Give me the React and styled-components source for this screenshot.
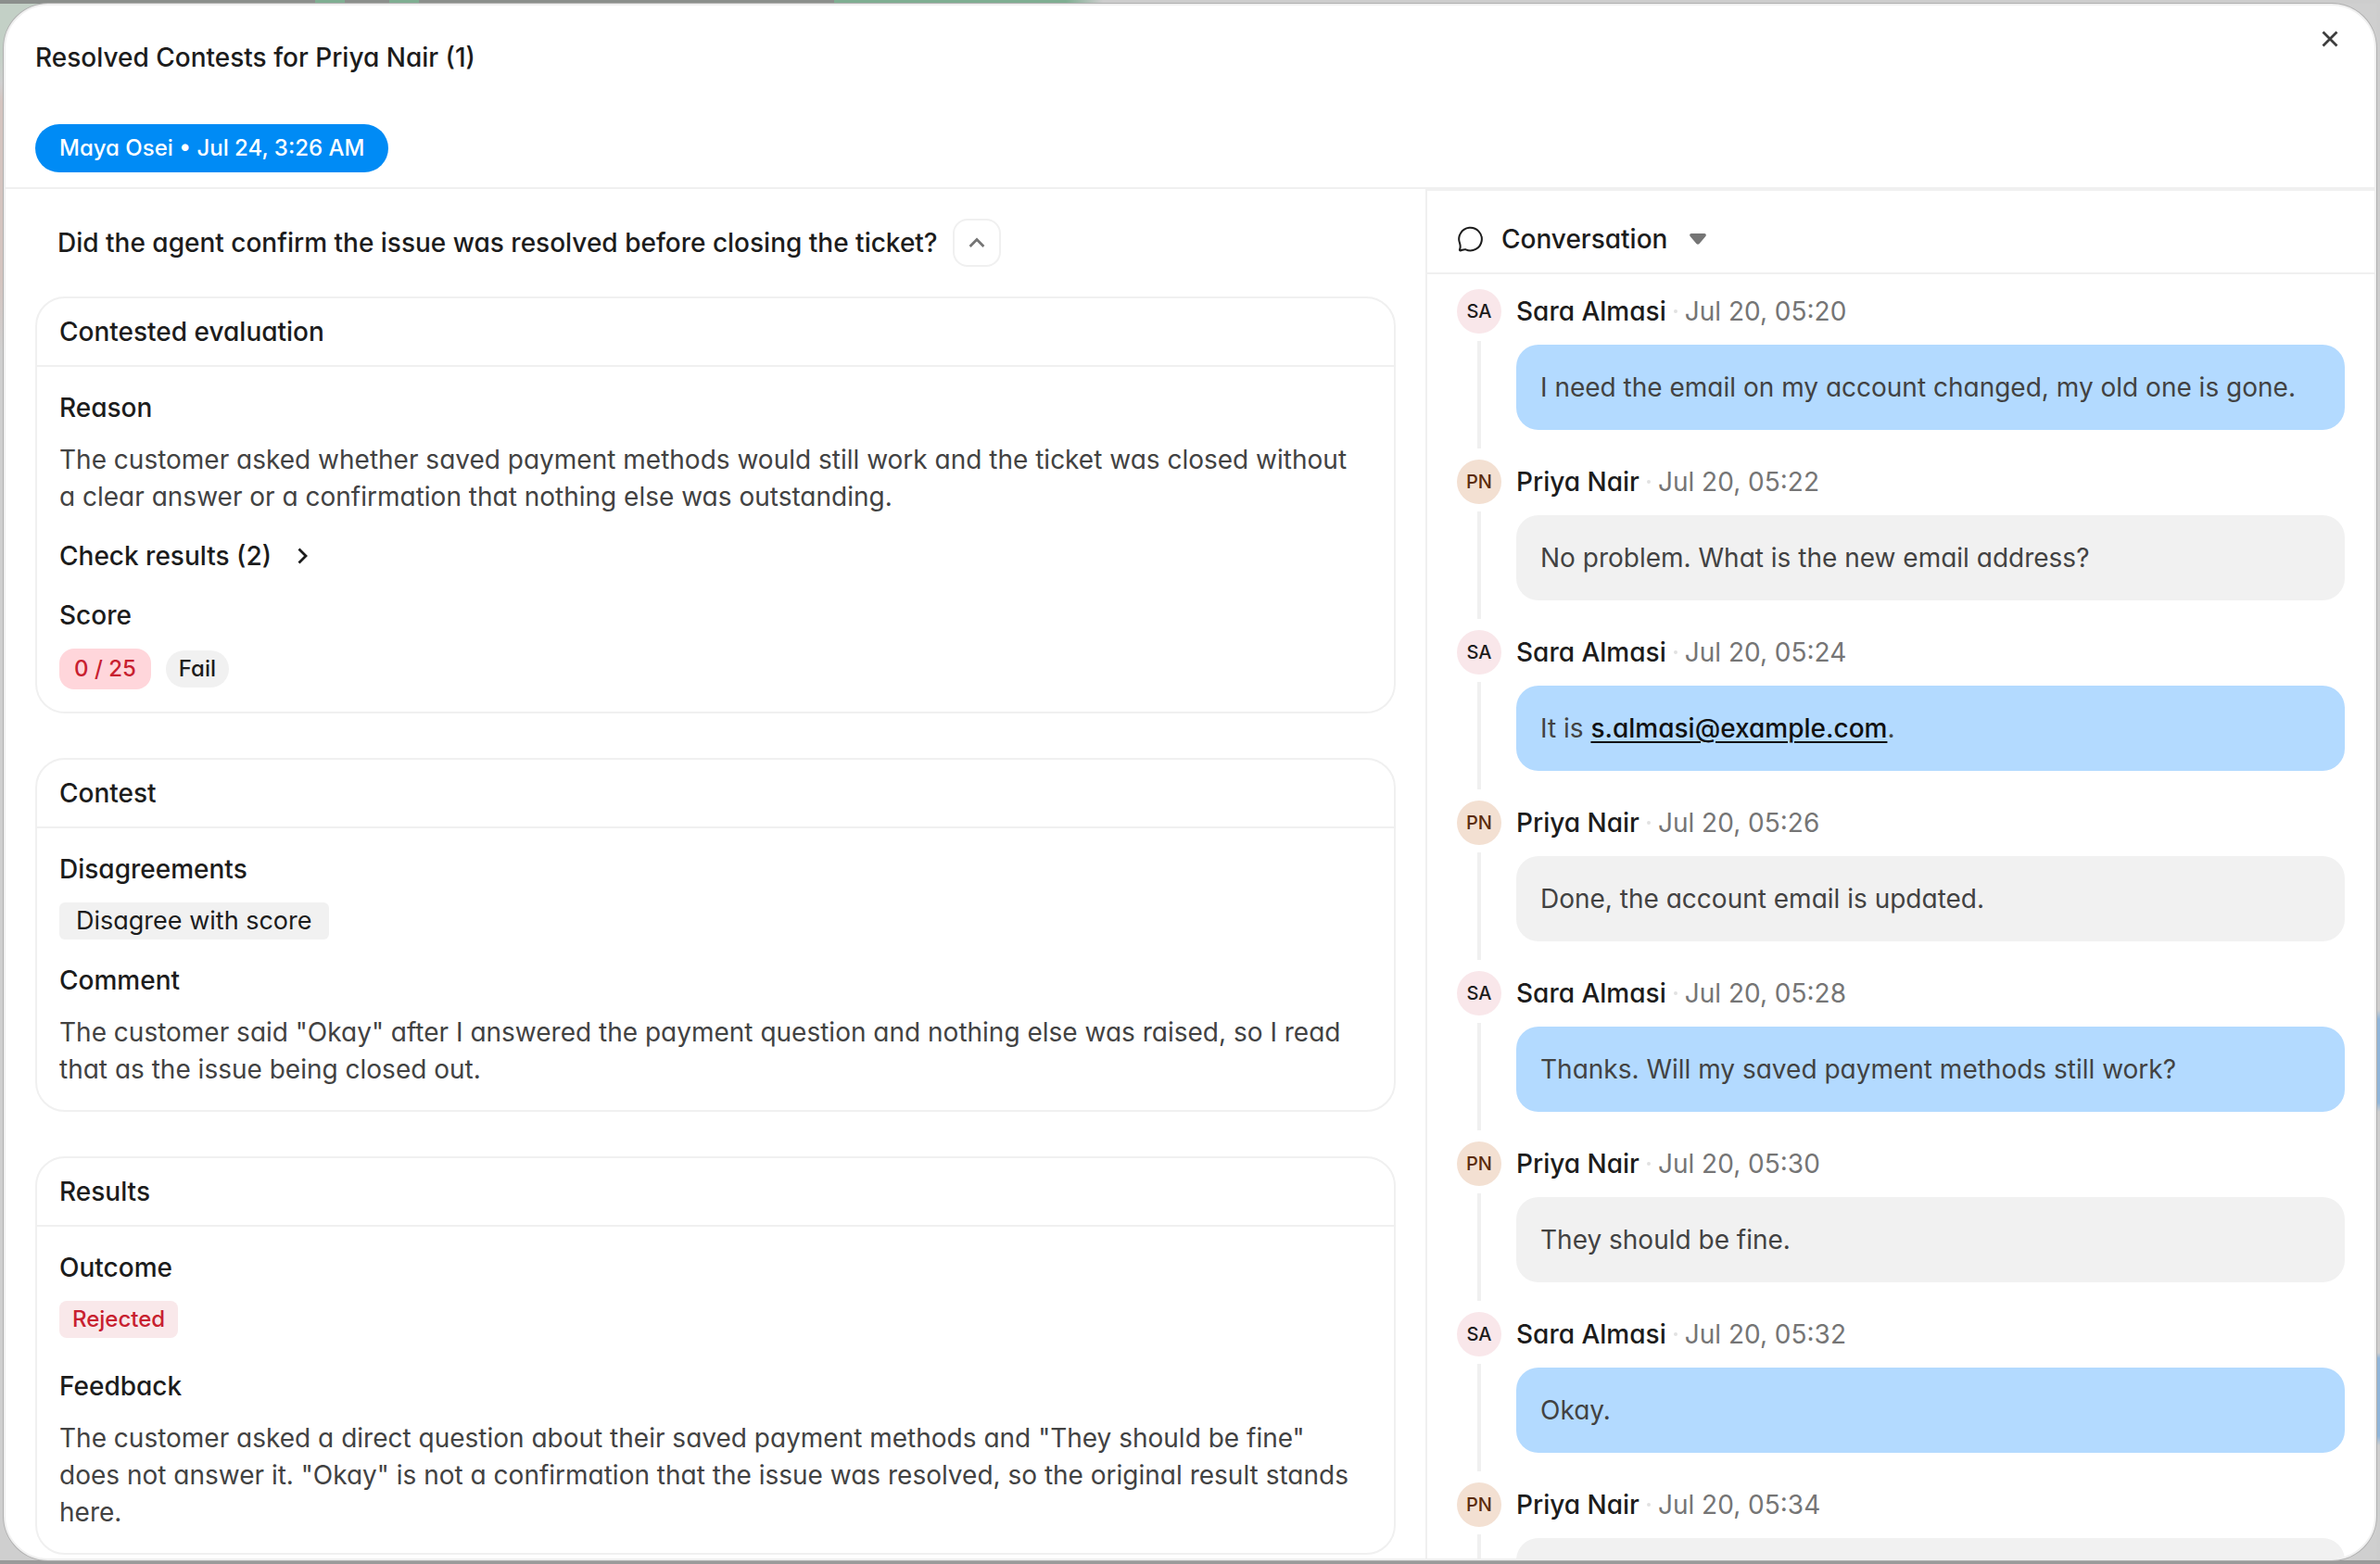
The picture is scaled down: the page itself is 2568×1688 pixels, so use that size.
import styled, { createGlobalStyle } from "styled-components";

const line = "#f0f0f0";

const GlobalStyle = createGlobalStyle`
  * {
    box-sizing: border-box;
  }
  html,
  body,
  #root {
    height: 100%;
  }
  body {
    margin: 0;
    overflow: hidden;
    font-family: Inter, "Liberation Sans", sans-serif;
    font-feature-settings: "cv11";
    font-size: 28px;
    line-height: 40px;
    color: #1c1c1c;
    -webkit-font-smoothing: antialiased;
  }
  button {
    font: inherit;
    font-feature-settings: inherit;
    color: inherit;
    padding: 0;
    border: 0;
    background: none;
    cursor: pointer;
  }
  h1,
  h2,
  h3,
  p,
  ol {
    margin: 0;
    padding: 0;
    font-size: inherit;
    font-weight: inherit;
  }
  svg {
    display: block;
  }
`;

const Backdrop = styled.div`
  height: 100%;
  padding: 4px;
  background:
    linear-gradient(90deg, #8b8f8c 0 340px, #7fae92 340px 372px, #8b8f8c 372px 420px, #7fae92 420px 452px, #8b8f8c 452px 900px, #7fae92 900px 1150px, #cdcdcd 1190px) top / 100% 4px no-repeat,
    linear-gradient(#9a9a9a, #9a9a9a) bottom / 100% 4px no-repeat,
    linear-gradient(#cdcdcd 0 1090px, #8fb5d9 1100px 1190px, #cdcdcd 1200px 1460px, #8fb5d9 1466px 1550px, #cdcdcd 1560px) right / 4px 100% no-repeat,
    linear-gradient(#c3d0c6 0 60px, #cfcfcf 90px, #d4c4bf 110px 300px, #cfcfcf 380px) left / 60px 100% no-repeat,
    #cfcfcf;
`;

const Modal = styled.div`
  height: 100%;
  display: flex;
  flex-direction: column;
  overflow: hidden;
  background: #fff;
  border: 2px solid ${line};
  border-radius: 48px;
  box-shadow: 0 0 0 1px #b0b0b0;
`;

const Header = styled.header`
  flex: none;
  padding: 36px 32px 16px;
  border-bottom: 2px solid ${line};
`;

const TitleRow = styled.div`
  display: flex;
  align-items: flex-start;
  justify-content: space-between;
  margin-bottom: 52px;
`;

const Title = styled.h1`
  font-weight: 500;
`;

const CloseButton = styled.button`
  display: grid;
  place-items: center;
  width: 32px;
  height: 32px;
  margin-top: -16px;
  color: #3d3d3d;
`;

const ContestTab = styled.button`
  height: 52px;
  padding: 0 26px;
  border-radius: 26px;
  background: #008bf5;
  color: #fff;
  font-size: 24px;
  font-weight: 500;
`;

const Columns = styled.div`
  flex: 1;
  min-height: 0;
  display: grid;
  grid-template-columns: minmax(0, 1fr) 1024px;
`;

const Review = styled.main`
  padding: 32px 32px 0;
  overflow: hidden;
`;

const QuestionRow = styled.div`
  display: flex;
  align-items: center;
  gap: 16px;
  height: 52px;
  margin-bottom: 32px;
  padding-left: 24px;
`;

const Question = styled.h2`
  font-weight: 500;
`;

const CollapseButton = styled.button`
  display: grid;
  place-items: center;
  width: 52px;
  height: 52px;
  border: 2px solid ${line};
  border-radius: 16px;
  color: #757575;
`;

const Card = styled.section`
  margin-bottom: 48px;
  border: 2px solid ${line};
  border-radius: 32px;
`;

const CardTitle = styled.h3`
  padding: 16px 24px;
  border-bottom: 2px solid ${line};
  font-weight: 500;
`;

const CardBody = styled.div`
  display: flex;
  flex-direction: column;
  gap: 24px;
  padding: 24px 32px 24px 24px;
`;

const Label = styled.div`
  margin-bottom: 16px;
  font-weight: 500;
`;

const Text = styled.p`
  color: #424242;
`;

const CheckButton = styled.button`
  display: flex;
  align-items: center;
  align-self: flex-start;
  gap: 16px;
  font-weight: 500;
`;

const BadgeRow = styled.div`
  display: flex;
  align-items: center;
  gap: 16px;
  padding-bottom: ${(p) => (p.$spaced ? 8 : 0)}px;
`;

const tones = {
  score: { color: "#c8202f", background: "#ffd6db" },
  neutral: { color: "#1c1c1c", background: "#f1f1f1" },
  rejected: { color: "#c8202f", background: "#f9e8ea" },
};

const Badge = styled.span`
  padding: 0 ${(p) => p.$pad}px;
  border-radius: ${(p) => p.$radius}px;
  color: ${(p) => tones[p.$tone].color};
  background: ${(p) => tones[p.$tone].background};
  font-size: ${(p) => (p.$large ? 27 : 24)}px;
  font-weight: ${(p) => (p.$large ? 400 : 500)};
  line-height: ${(p) => (p.$tone === "score" ? 44 : 40)}px;
`;

const Side = styled.aside`
  display: flex;
  flex-direction: column;
  min-height: 0;
  border-left: 2px solid ${line};
  border-top: 2px solid ${line};
`;

const SideHeader = styled.button`
  flex: none;
  display: flex;
  align-items: center;
  height: 90px;
  padding: 16px 32px 0;
  border-bottom: 2px solid ${line};
  text-align: left;
`;

const SideTitle = styled.span`
  margin: 0 24px 0 20px;
  font-weight: 500;
`;

const Messages = styled.ol`
  flex: 1;
  min-height: 0;
  padding: 16px 32px 0;
  overflow: hidden;
  list-style: none;
`;

const Message = styled.li`
  display: grid;
  grid-template-columns: 48px 1fr;
  column-gap: 16px;
  height: 184px;
`;

const Rail = styled.div`
  display: flex;
  flex-direction: column;
  align-items: center;
  gap: 8px;
  padding-bottom: 12px;
`;

const Avatar = styled.span`
  width: 48px;
  height: 48px;
  border-radius: 50%;
  background: ${(p) => (p.$agent ? "#f3e0d2" : "#f9e7ea")};
  color: ${(p) => (p.$agent ? "#5c2c0c" : "#1c1c1c")};
  font-size: 20px;
  font-weight: 500;
  line-height: 48px;
  text-align: center;
`;

const Thread = styled.span`
  flex: 1;
  width: 4px;
  background: ${line};
`;

const Meta = styled.div`
  display: flex;
  align-items: center;
  gap: 8px;
  height: 48px;
  margin-bottom: 12px;
`;

const Author = styled.span`
  font-weight: 500;
`;

const Dot = styled.span`
  width: 4px;
  height: 4px;
  border-radius: 50%;
  background: #e2e2e2;
`;

const Time = styled.time`
  color: #757575;
`;

const Bubble = styled.p`
  padding: 26px;
  min-height: 92px;
  border-radius: 24px;
  background: ${(p) => (p.$agent ? "#f1f1f1" : "#b3daff")};
  color: #424242;
`;

const MailLink = styled.a`
  color: #111;
  font-weight: 500;
  text-decoration: underline;
  text-decoration-thickness: 2px;
  text-underline-offset: 4px;
`;

const messages = [
  { time: "05:20", text: "I need the email on my account changed, my old one is gone." },
  { agent: true, time: "05:22", text: "No problem. What is the new email address?" },
  {
    time: "05:24",
    text: (
      <>
        It is <MailLink href="mailto:s.almasi@example.com">s.almasi@example.com</MailLink>.
      </>
    ),
  },
  { agent: true, time: "05:26", text: "Done, the account email is updated." },
  { time: "05:28", text: "Thanks. Will my saved payment methods still work?" },
  { agent: true, time: "05:30", text: "They should be fine." },
  { time: "05:32", text: "Okay." },
  { agent: true, time: "05:34", text: "" },
];

function StrokeIcon({ size, width = 2, children }) {
  return (
    <svg
      width={size}
      height={size}
      viewBox={`0 0 ${size} ${size}`}
      fill="none"
      stroke="currentColor"
      strokeWidth={width}
      aria-hidden="true"
    >
      {children}
    </svg>
  );
}

function Field({ label, children }) {
  return (
    <div>
      <Label>{label}</Label>
      {children}
    </div>
  );
}

export default function App() {
  return (
    <Backdrop>
      <GlobalStyle />
      <Modal role="dialog" aria-labelledby="contests-title">
        <Header>
          <TitleRow>
            <Title id="contests-title">Resolved Contests for Priya Nair (1)</Title>
            <CloseButton aria-label="Close">
              <StrokeIcon size={28} width={2.8}>
                <path d="M6.500 6.500l15 15M21.500 6.500l-15 15" />
              </StrokeIcon>
            </CloseButton>
          </TitleRow>
          <ContestTab>Maya Osei • Jul 24, 3:26 AM</ContestTab>
        </Header>
        <Columns>
          <Review>
            <QuestionRow>
              <Question>Did the agent confirm the issue was resolved before closing the ticket?</Question>
              <CollapseButton aria-label="Collapse">
                <StrokeIcon size={24} width={2.8}>
                  <path d="m4.600 16 7.400-7.400 7.400 7.400" />
                </StrokeIcon>
              </CollapseButton>
            </QuestionRow>
            <Card>
              <CardTitle>Contested evaluation</CardTitle>
              <CardBody>
                <Field label="Reason">
                  <Text>
                    The customer asked whether saved payment methods would still work and the ticket was closed without
                    a clear answer or a confirmation that nothing else was outstanding.
                  </Text>
                </Field>
                <CheckButton>
                  Check results (2)
                  <StrokeIcon size={32} width={2.8}>
                    <path d="m13.500 8.500 7.500 7.500-7.500 7.500" />
                  </StrokeIcon>
                </CheckButton>
                <Field label="Score">
                  <BadgeRow>
                    <Badge $tone="score" $pad={16} $radius={16}>0 / 25</Badge>
                    <Badge $tone="neutral" $pad={14} $radius={20}>Fail</Badge>
                  </BadgeRow>
                </Field>
              </CardBody>
            </Card>
            <Card>
              <CardTitle>Contest</CardTitle>
              <CardBody>
                <Field label="Disagreements">
                  <BadgeRow>
                    <Badge $tone="neutral" $pad={18} $radius={6} $large>Disagree with score</Badge>
                  </BadgeRow>
                </Field>
                <Field label="Comment">
                  <Text>
                    The customer said "Okay" after I answered the payment question and nothing else was raised, so I
                    read that as the issue being closed out.
                  </Text>
                </Field>
              </CardBody>
            </Card>
            <Card>
              <CardTitle>Results</CardTitle>
              <CardBody>
                <Field label="Outcome">
                  <BadgeRow $spaced>
                    <Badge $tone="rejected" $pad={14} $radius={8}>Rejected</Badge>
                  </BadgeRow>
                </Field>
                <Field label="Feedback">
                  <Text>
                    The customer asked a direct question about their saved payment methods and "They should be fine"
                    does not answer it. "Okay" is not a confirmation that the issue was resolved, so the original result
                    stands here.
                  </Text>
                </Field>
              </CardBody>
            </Card>
          </Review>
          <Side>
            <SideHeader>
              <StrokeIcon size={28} width={2}>
                <path
                  d="M3.800 26.400c-.6.1-1-.5-.8-1 1-2.400.9-4.300.1-6.800a12.300 12.300 0 1 1 6.400 6.700c-2-.6-3.600.7-5.700 1.100Z"
                  strokeLinejoin="round"
                />
              </StrokeIcon>
              <SideTitle>Conversation</SideTitle>
              <svg width="18" height="12" viewBox="0 0 18 12" fill="#757575" aria-hidden="true">
                <path d="M1.900 0h14.200c1.500 0 2.300 1.800 1.300 2.900l-6.800 8c-.9 1.100-2.300 1.100-3.200 0l-6.800-8C-.4 1.800.4 0 1.900 0Z" />
              </svg>
            </SideHeader>
            <Messages>
              {messages.map((m) => (
                <Message key={m.time}>
                  <Rail>
                    <Avatar $agent={m.agent}>{m.agent ? "PN" : "SA"}</Avatar>
                    <Thread />
                  </Rail>
                  <div>
                    <Meta>
                      <Author>{m.agent ? "Priya Nair" : "Sara Almasi"}</Author>
                      <Dot />
                      <Time>Jul 20, {m.time}</Time>
                    </Meta>
                    <Bubble $agent={m.agent}>{m.text}</Bubble>
                  </div>
                </Message>
              ))}
            </Messages>
          </Side>
        </Columns>
      </Modal>
    </Backdrop>
  );
}
